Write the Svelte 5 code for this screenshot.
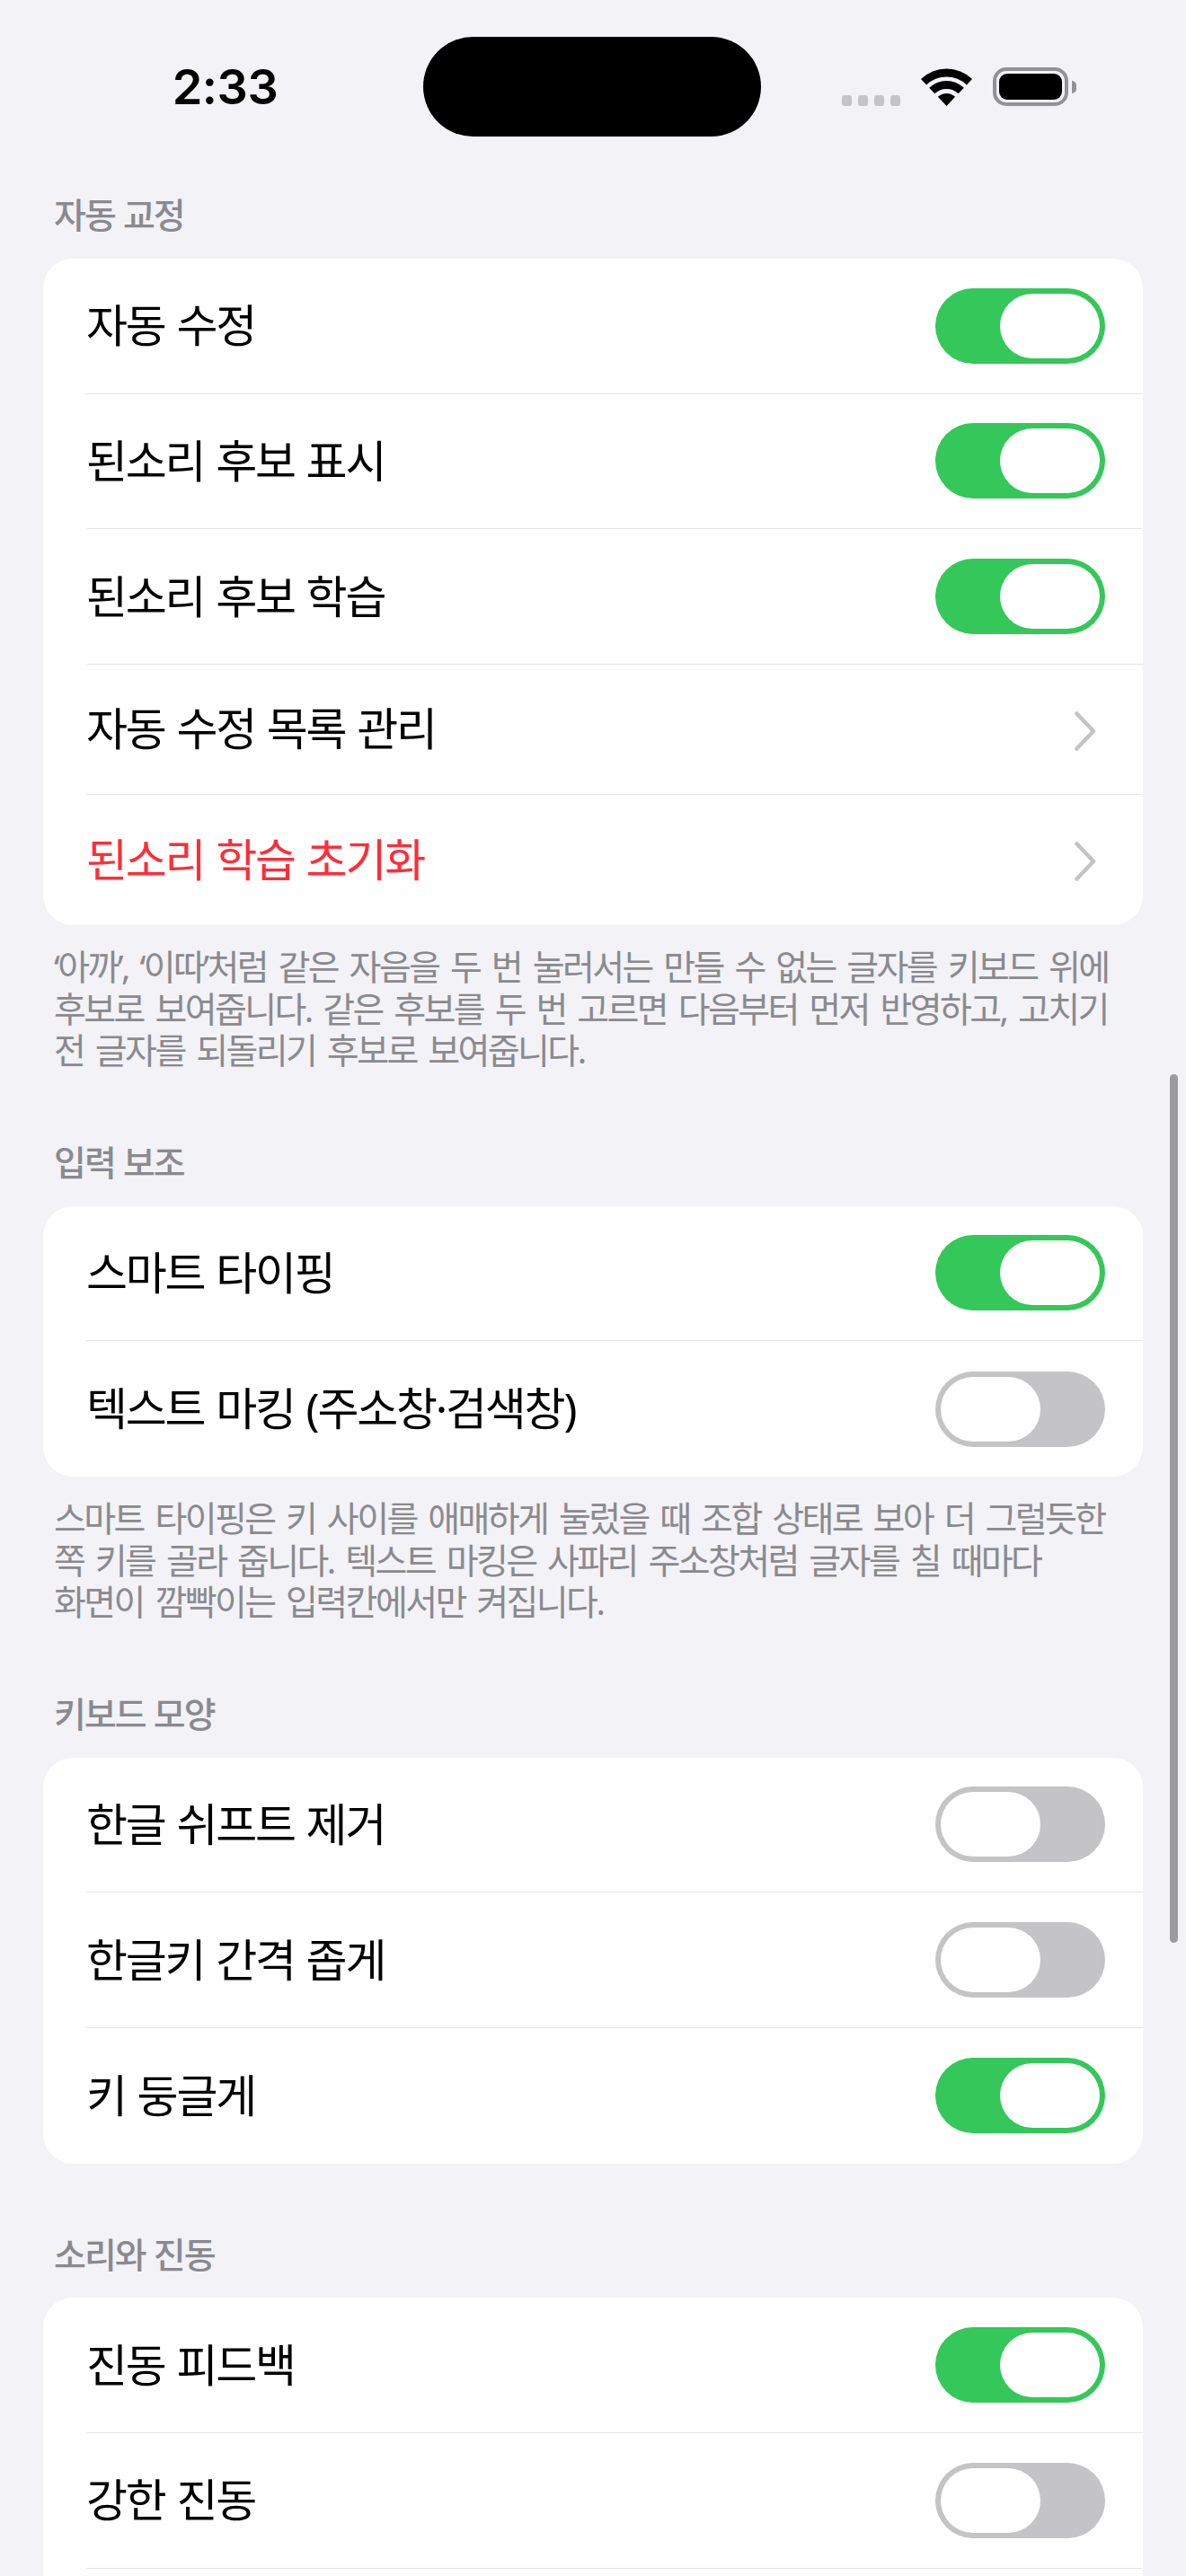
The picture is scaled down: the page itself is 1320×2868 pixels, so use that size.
<script lang="ts">
  type Row = { label: string; on?: boolean; link?: boolean; danger?: boolean };
  type Section = { title: string; rows: Row[]; note?: string };

  const sections: Section[] = [
    {
      title: '자동 교정',
      rows: [
        { label: '자동 수정', on: true },
        { label: '된소리 후보 표시', on: true },
        { label: '된소리 후보 학습', on: true },
        { label: '자동 수정 목록 관리', link: true },
        { label: '된소리 학습 초기화', link: true, danger: true }
      ],
      note: '‘아까’, ‘이따’처럼 같은 자음을 두 번 눌러서는 만들 수 없는 글자를 키보드 위에\n후보로 보여줍니다. 같은 후보를 두 번 고르면 다음부터 먼저 반영하고, 고치기\n전 글자를 되돌리기 후보로 보여줍니다.'
    },
    {
      title: '입력 보조',
      rows: [
        { label: '스마트 타이핑', on: true },
        { label: '텍스트 마킹 (주소창·검색창)', on: false }
      ],
      note: '스마트 타이핑은 키 사이를 애매하게 눌렀을 때 조합 상태로 보아 더 그럴듯한\n쪽 키를 골라 줍니다. 텍스트 마킹은 사파리 주소창처럼 글자를 칠 때마다\n화면이 깜빡이는 입력칸에서만 켜집니다.'
    },
    {
      title: '키보드 모양',
      rows: [
        { label: '한글 쉬프트 제거', on: false },
        { label: '한글키 간격 좁게', on: false },
        { label: '키 둥글게', on: true }
      ]
    },
    {
      title: '소리와 진동',
      rows: [
        { label: '진동 피드백', on: true },
        { label: '강한 진동', on: false },
        { label: '', on: false }
      ]
    }
  ];
</script>

<div class="screen">
  <header class="status">
    <div class="time">2:33</div>
    <div class="island"></div>
    <div class="indicators">
      <div class="signal">
        <span></span><span></span><span></span><span></span>
      </div>
      <svg class="wifi" width="57" height="42" viewBox="0 0 57 42" aria-hidden="true">
        <path d="M0 11.9A41.5 41.5 0 0 1 57 11.9L50.9 18.4A32.5 32.5 0 0 0 6.1 18.4Z" />
        <path d="M9.2 21.7A28 28 0 0 1 47.8 21.7L41.6 28.2A19 19 0 0 0 15.4 28.2Z" />
        <path d="M18.9 31.8A14 14 0 0 1 38.1 31.8L28.5 42Z" />
      </svg>
      <div class="battery">
        <div class="shell"><div class="level"></div></div>
        <div class="cap"></div>
      </div>
    </div>
  </header>

  <main class="list">
    {#each sections as section}
      <section class="group">
        <h2 class="group-title">{section.title}</h2>
        <div class="card">
          {#each section.rows as row}
            <div class="row" class:link={row.link}>
              <span class="label" class:danger={row.danger}>{row.label}</span>
              {#if row.link}
                <svg class="chevron" width="24" height="44" viewBox="0 0 24 44" aria-hidden="true">
                  <path d="M2.5 2.5L21 22L2.5 41.5" />
                </svg>
              {:else}
                <div class="toggle" class:on={row.on}><div class="knob"></div></div>
              {/if}
            </div>
          {/each}
        </div>
        {#if section.note}
          <p class="note">{section.note}</p>
        {/if}
      </section>
    {/each}
  </main>

  <div class="scrollbar"></div>
</div>

<style>
:global(body) {
  margin: 0;
  background: #f2f2f7;
}
.screen {
  position: relative;
  width: 1320px;
  height: 2868px;
  overflow: hidden;
  background: #f2f2f7;
  font-family: "Noto Sans", "Noto Sans CJK KR", sans-serif;
  color: #000;
}

/* status bar */
.status {
  display: flex;
  align-items: flex-start;
  height: 152px;
}
.time {
  width: 471px;
  box-sizing: border-box;
  margin-top: 64px;
  padding-left: 30px;
  text-align: center;
  font-family: Inter, "Liberation Sans", sans-serif;
  font-size: 54px;
  line-height: 66px;
  font-weight: 600;
  letter-spacing: -0.5px;
}
.island {
  width: 376px;
  height: 111px;
  margin-top: 41px;
  border-radius: 56px;
  background: #000;
}
.indicators {
  display: flex;
  align-items: flex-end;
  height: 43px;
  margin-top: 75px;
  margin-left: 90px;
}
.signal {
  display: flex;
  gap: 7px;
  margin-right: 23px;
}
.signal span {
  width: 11px;
  height: 12px;
  border-radius: 3px;
  background: #c4c4c8;
}
.wifi {
  display: block;
  margin-right: 23px;
}
.wifi path {
  fill: #000;
}
.battery {
  display: flex;
  align-items: center;
  gap: 4px;
}
.shell {
  width: 84px;
  height: 43px;
  box-sizing: border-box;
  padding: 3px;
  border: 4px solid #929296;
  border-radius: 15px;
}
.level {
  height: 100%;
  border-radius: 9px;
  background: #000;
}
.cap {
  width: 5px;
  height: 14px;
  border-radius: 0 5px 5px 0;
  background: #929296;
}

/* settings list */
.list {
  padding: 64.33px 48px 0;
}
.group {
  margin-bottom: 78px;
}
.group-title {
  margin: 0 0 25px 12px;
  font-size: 39px;
  line-height: 46.67px;
  font-weight: 500;
  letter-spacing: -2px;
  word-spacing: 1px;
  color: #8a8a8e;
}
.card {
  background: #fff;
  border-radius: 33px;
  overflow: hidden;
}
.row {
  display: flex;
  align-items: center;
  justify-content: space-between;
  height: 150.67px;
  margin-left: 48px;
  padding-right: 42px;
  box-sizing: border-box;
  border-bottom: 1.5px solid #e5e5ea;
}
.row:last-child {
  border-bottom: none;
}
.row.link {
  height: 145px;
  padding-right: 52px;
}
.label {
  padding-bottom: 6px;
  font-size: 50px;
  letter-spacing: -2.2px;
  word-spacing: 2px;
  white-space: nowrap;
}
.label.danger {
  color: #ff2d37;
}
.toggle {
  display: flex;
  justify-content: flex-start;
  width: 189px;
  height: 84px;
  box-sizing: border-box;
  padding: 6px;
  border-radius: 42px;
  background: #c4c4c6;
}
.toggle.on {
  justify-content: flex-end;
  background: #34c759;
}
.knob {
  width: 111px;
  height: 72px;
  border-radius: 36px;
  background: #fff;
}
.chevron {
  display: block;
  margin-top: 4px;
}
.chevron path {
  fill: none;
  stroke: #c4c4c6;
  stroke-width: 4.5;
  stroke-linecap: round;
  stroke-linejoin: round;
}
.note {
  margin: 23px 12px 0;
  font-size: 39px;
  line-height: 46.67px;
  letter-spacing: -2.6px;
  word-spacing: 5px;
  color: #8a8a8e;
  white-space: pre-line;
}

.scrollbar {
  position: absolute;
  top: 1196px;
  left: 1302px;
  width: 9px;
  height: 967px;
  border-radius: 5px;
  background: #9c9ca0;
}
</style>
